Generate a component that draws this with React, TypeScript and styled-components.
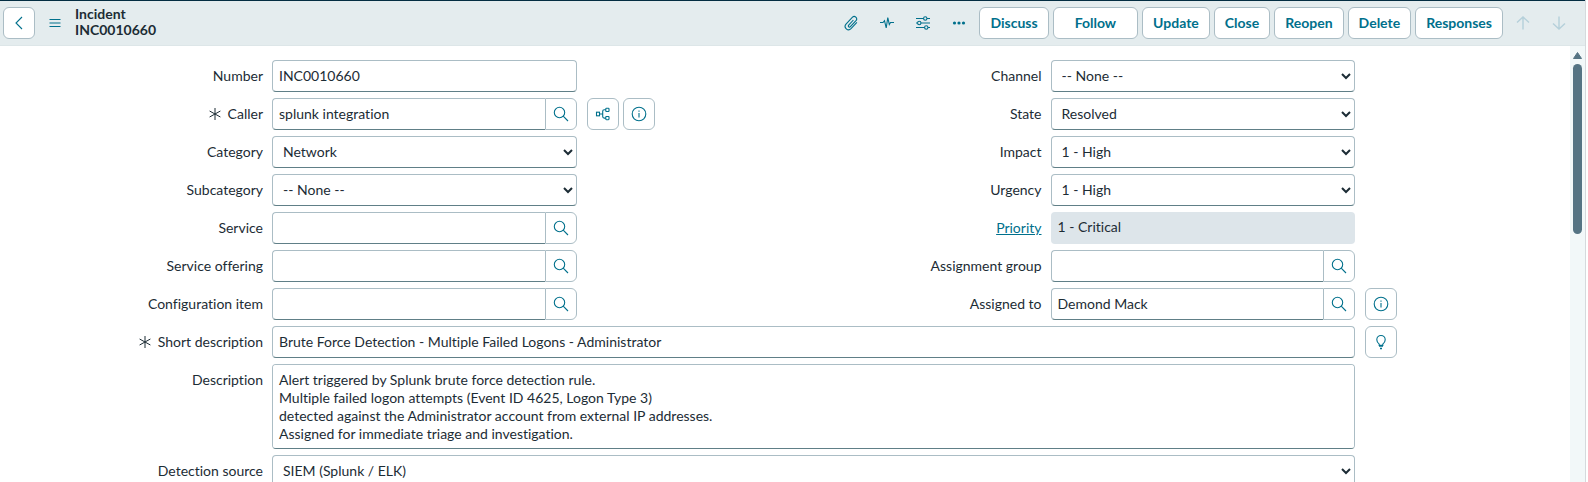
import React, { useId } from "react";
import styled, { createGlobalStyle, css } from "styled-components";

const color = {
  ink: "#1c2c35",
  teal: "#00708c",
  line: "#abbdc5",
  lineStrong: "#607f87",
  bar: "#e4ecee",
  navy: "#032d42",
  readonly: "#dde5ea",
  track: "#f2f8f9",
  thumb: "#557484",
};

const GlobalStyle = createGlobalStyle`
  *, *::before, *::after { box-sizing: border-box; }
  body {
    margin: 0;
    background: #fff;
    color: ${color.ink};
    font: 14px/18px Lato, "Liberation Sans", sans-serif;
    font-variant-ligatures: none;
  }
  button, input, select, textarea {
    font: inherit;
    font-variant-ligatures: none;
    color: inherit;
    margin: 0;
  }
`;

const Page = styled.div`
  display: flex;
  flex-direction: column;
  height: 100vh;
  margin-right: 2px;
  border-right: 1px solid #d5dadd;
  overflow: hidden;
`;

const Header = styled.header`
  display: flex;
  align-items: center;
  gap: 4px;
  flex: none;
  padding: 6px 10px 6px 3px;
  border-top: 1px solid ${color.navy};
  border-bottom: 1px solid #dde6e8;
  background: ${color.bar};
`;

const Title = styled.h1`
  flex: 1;
  align-self: flex-start;
  height: 32px;
  margin: -1px 0 0;
  font-size: 14px;
  line-height: 16px;
  font-weight: 700;
`;

const TitleLine = styled.span`
  display: block;
`;

const buttonFrame = css`
  border: 1px solid ${color.line};
  border-radius: 6px;
  background: #fff;
  color: ${color.teal};
`;

const ActionButton = styled.button<{ $wide?: boolean }>`
  ${buttonFrame}
  height: 32px;
  padding: 0 ${(p) => (p.$wide ? 21 : 10)}px 1px;
  font-weight: 700;
`;

const IconButton = styled.button<{ $bare?: boolean; $faded?: boolean }>`
  ${buttonFrame}
  display: grid;
  place-items: center;
  flex: none;
  width: 32px;
  height: 32px;
  padding: 0;
  ${(p) => p.$bare && "border-color: transparent; background: none;"}
  ${(p) => p.$faded && "color: #b5d0da;"}
`;

const Content = styled.div`
  display: flex;
  flex: 1;
  min-height: 0;
`;

const Form = styled.form`
  flex: 1;
  min-width: 0;
  display: flex;
  flex-direction: column;
  gap: 6px;
  padding: 14px 8px 0 5px;
`;

const Columns = styled.div`
  display: grid;
  grid-template-columns: 1fr 1fr;
`;

const Column = styled.div`
  display: flex;
  flex-direction: column;
  gap: 6px;
  min-width: 0;
`;

const FieldRow = styled.div`
  display: grid;
  grid-template-columns: 258px minmax(0, 1fr) 198px;
  column-gap: 9px;
  align-items: start;
`;

const Label = styled.label`
  display: flex;
  align-items: center;
  justify-content: flex-end;
  gap: 7px;
  height: 32px;
`;

const LabelLink = styled.a`
  color: ${color.teal};
  text-decoration: underline;
`;

const Extras = styled.div`
  display: flex;
  gap: 4px;
  padding-left: 1px;
`;

const frame = css`
  display: block;
  width: 100%;
  min-width: 0;
  border: 1px solid ${color.line};
  border-bottom-color: ${color.lineStrong};
  border-radius: 4px;
  background: #fff;
`;

const TextInput = styled.input<{ $joined?: boolean }>`
  ${frame}
  height: 32px;
  padding: 0 6px 2px;
  ${(p) => p.$joined && "border-right: 0; border-radius: 4px 0 0 4px;"}
  &:read-only {
    border-color: transparent;
    background: ${color.readonly};
    padding-bottom: 4px;
  }
`;

const TextArea = styled.textarea`
  ${frame}
  height: 85px;
  padding: 6px;
  resize: none;
`;

const Select = styled.select`
  ${frame}
  height: 32px;
  padding: 0 0 2px 6px;
`;

const LookupGroup = styled.div`
  display: flex;
`;

const LookupButton = styled.button`
  ${buttonFrame}
  display: grid;
  place-items: center;
  flex: none;
  width: 32px;
  height: 32px;
  padding: 0;
  border-radius: 0 6px 6px 0;
`;

const ScrollTrack = styled.div`
  flex: none;
  width: 15px;
  padding: 6px 3px 0;
  background: ${color.track};
`;

const ScrollThumb = styled.div`
  height: 170px;
  margin-top: 5px;
  border-radius: 5px;
  background: ${color.thumb};
`;

const Svg = styled.svg`
  display: block;
  fill: none;
  stroke: currentColor;
  stroke-width: 1.1;
`;

const SearchIcon = () => (
  <Svg width="16" height="16" viewBox="0 0 16 16">
    <circle cx="6.5" cy="6.5" r="5.2" />
    <path d="M10.2 10.2 15 15" />
  </Svg>
);

const InfoIcon = () => (
  <Svg width="16" height="16" viewBox="0 0 16 16">
    <circle cx="8" cy="8" r="6.8" />
    <path d="M8 7v4.5M8 4.5v1.2" />
  </Svg>
);

const MapIcon = () => (
  <Svg width="16" height="16" viewBox="0 0 16 16">
    <rect x="1.5" y="6.200" width="3" height="3.600" />
    <rect x="10.800" y="2.300" width="3.200" height="3.200" rx=".6" />
    <rect x="10.800" y="10.500" width="3.200" height="3.200" rx=".6" />
    <path d="M4.500 8h3.200M10.800 3.700H9.200Q7.700 3.700 7.700 5.200v5.400q0 1.500 1.500 1.500h1.600" />
  </Svg>
);

const BulbIcon = () => (
  <Svg width="16" height="16" viewBox="0 0 16 16">
    <path d="M6.200 11.400V10.200C4.600 8.800 3.800 7.600 3.800 5.700a4.200 4.200 0 0 1 8.400 0c0 1.900-.8 3.100-2.400 4.500v1.200z" />
    <path d="M6 12h4M7 14.500h2" strokeWidth="1.500" />
  </Svg>
);

const BackIcon = () => (
  <Svg width="16" height="16" viewBox="0 0 16 16">
    <path d="M11 2 5 8l6 6" />
  </Svg>
);

const MenuIcon = () => (
  <Svg width="16" height="16" viewBox="0 0 16 16">
    <path d="M2.500 4.500h11M2.500 8h11M2.500 11.500h11" />
  </Svg>
);

const ClipIcon = () => (
  <Svg width="16" height="16" viewBox="0 0 16 16">
    <path d="M10.400 5 5.700 10.200a1.100 1.100 0 0 0 1.700 1.500l5.800-6.300a2.500 2.500 0 0 0-3.700-3.300L3 9.100a3.400 3.400 0 0 0 5 4.600l5.900-6.400" />
  </Svg>
);

const PulseIcon = () => (
  <Svg width="16" height="16" viewBox="0 0 16 16">
    <path d="M1 7.500h3l1.500-1.800L7.200 13 8.800 2.500l1.500 7 1.200-2H15" />
  </Svg>
);

const SlidersIcon = () => (
  <Svg width="16" height="16" viewBox="0 0 16 16">
    <path d="M1 3.500h7.500M12 3.500h3M1 8h1.500M6 8h9M1 12.500h8.500M13 12.500h2" />
    <circle cx="10.250" cy="3.500" r="1.700" />
    <circle cx="4.250" cy="8" r="1.700" />
    <circle cx="11.250" cy="12.500" r="1.700" />
  </Svg>
);

const DotsIcon = () => (
  <Svg width="16" height="16" viewBox="0 0 16 16">
    <g fill="currentColor" stroke="none">
      <circle cx="3.500" cy="8" r="1.600" />
      <circle cx="8" cy="8" r="1.600" />
      <circle cx="12.500" cy="8" r="1.600" />
    </g>
  </Svg>
);

const ArrowIcon = ({ down }: { down?: boolean }) => (
  <Svg width="16" height="16" viewBox="0 0 16 16">
    <path
      d={down ? "M8 1.500v12.500M2 8.500l6 5.500 6-5.500" : "M8 14.500V2M2 7.500 8 2l6 5.500"}
      strokeWidth="1.400"
    />
  </Svg>
);

const RequiredIcon = () => (
  <Svg width="12" height="12" viewBox="0 0 12 12">
    <path d="M6 0v12M.6 3l10.800 6M11.400 3 .6 9" strokeWidth="1" />
  </Svg>
);

const ScrollUpIcon = () => (
  <Svg width="9" height="7" viewBox="0 0 9 7">
    <path
      d="M4.500 .5 8.500 6.500H.5z"
      fill={color.thumb}
      stroke={color.thumb}
      strokeLinejoin="round"
      strokeWidth="1"
    />
  </Svg>
);

type FieldProps = {
  label: string;
  required?: boolean;
  href?: string;
  extras?: React.ReactNode;
  children: (id: string) => React.ReactNode;
};

const Field = ({ label, required, href, extras, children }: FieldProps) => {
  const id = useId();
  return (
    <FieldRow>
      <Label htmlFor={id}>
        {required && <RequiredIcon />}
        {href ? <LabelLink href={href}>{label}</LabelLink> : label}
      </Label>
      {children(id)}
      {extras && <Extras>{extras}</Extras>}
    </FieldRow>
  );
};

type ControlProps = {
  label: string;
  value?: string;
  required?: boolean;
  readOnly?: boolean;
  href?: string;
  extras?: React.ReactNode;
};

const TextField = ({ value, readOnly, ...rest }: ControlProps) => (
  <Field {...rest}>
    {(id) => <TextInput id={id} type="text" defaultValue={value} readOnly={readOnly} />}
  </Field>
);

const SelectField = ({ value, ...rest }: ControlProps) => (
  <Field {...rest}>
    {(id) => (
      <Select id={id} defaultValue={value}>
        <option>{value}</option>
      </Select>
    )}
  </Field>
);

const LookupField = ({ value, ...rest }: ControlProps) => (
  <Field {...rest}>
    {(id) => (
      <LookupGroup>
        <TextInput id={id} type="text" defaultValue={value} $joined />
        <LookupButton type="button" aria-label={`Look up ${rest.label}`}>
          <SearchIcon />
        </LookupButton>
      </LookupGroup>
    )}
  </Field>
);

const description = `Alert triggered by Splunk brute force detection rule.
Multiple failed logon attempts (Event ID 4625, Logon Type 3)
detected against the Administrator account from external IP addresses.
Assigned for immediate triage and investigation.`;

const actions = ["Discuss", "Follow", "Update", "Close", "Reopen", "Delete", "Responses"];

const InfoButton = () => (
  <IconButton type="button" aria-label="Preview record">
    <InfoIcon />
  </IconButton>
);

export default function App() {
  return (
    <Page>
      <GlobalStyle />
      <Header>
        <IconButton aria-label="Back">
          <BackIcon />
        </IconButton>
        <IconButton $bare aria-label="Additional actions">
          <MenuIcon />
        </IconButton>
        <Title>
          <TitleLine>Incident</TitleLine>
          <TitleLine>INC0010660</TitleLine>
        </Title>
        <IconButton $bare aria-label="Attachments">
          <ClipIcon />
        </IconButton>
        <IconButton $bare aria-label="Activity">
          <PulseIcon />
        </IconButton>
        <IconButton $bare aria-label="Personalize form">
          <SlidersIcon />
        </IconButton>
        <IconButton $bare aria-label="More options">
          <DotsIcon />
        </IconButton>
        {actions.map((name) => (
          <ActionButton key={name} $wide={name === "Follow"}>
            {name}
          </ActionButton>
        ))}
        <IconButton $bare $faded aria-label="Previous record">
          <ArrowIcon />
        </IconButton>
        <IconButton $bare $faded aria-label="Next record">
          <ArrowIcon down />
        </IconButton>
      </Header>
      <Content>
        <Form>
          <Columns>
            <Column>
              <TextField label="Number" value="INC0010660" />
              <LookupField
                label="Caller"
                value="splunk integration"
                required
                extras={
                  <>
                    <IconButton type="button" aria-label="Show dependency map">
                      <MapIcon />
                    </IconButton>
                    <InfoButton />
                  </>
                }
              />
              <SelectField label="Category" value="Network" />
              <SelectField label="Subcategory" value="-- None --" />
              <LookupField label="Service" />
              <LookupField label="Service offering" />
              <LookupField label="Configuration item" />
            </Column>
            <Column>
              <SelectField label="Channel" value="-- None --" />
              <SelectField label="State" value="Resolved" />
              <SelectField label="Impact" value="1 - High" />
              <SelectField label="Urgency" value="1 - High" />
              <TextField label="Priority" value="1 - Critical" href="#priority" readOnly />
              <LookupField label="Assignment group" />
              <LookupField label="Assigned to" value="Demond Mack" extras={<InfoButton />} />
            </Column>
          </Columns>
          <TextField
            label="Short description"
            value="Brute Force Detection - Multiple Failed Logons - Administrator"
            required
            extras={
              <IconButton type="button" aria-label="Suggestions">
                <BulbIcon />
              </IconButton>
            }
          />
          <Field label="Description">
            {(id) => <TextArea id={id} defaultValue={description} />}
          </Field>
          <SelectField label="Detection source" value="SIEM (Splunk / ELK)" />
        </Form>
        <ScrollTrack>
          <ScrollUpIcon />
          <ScrollThumb />
        </ScrollTrack>
      </Content>
    </Page>
  );
}
